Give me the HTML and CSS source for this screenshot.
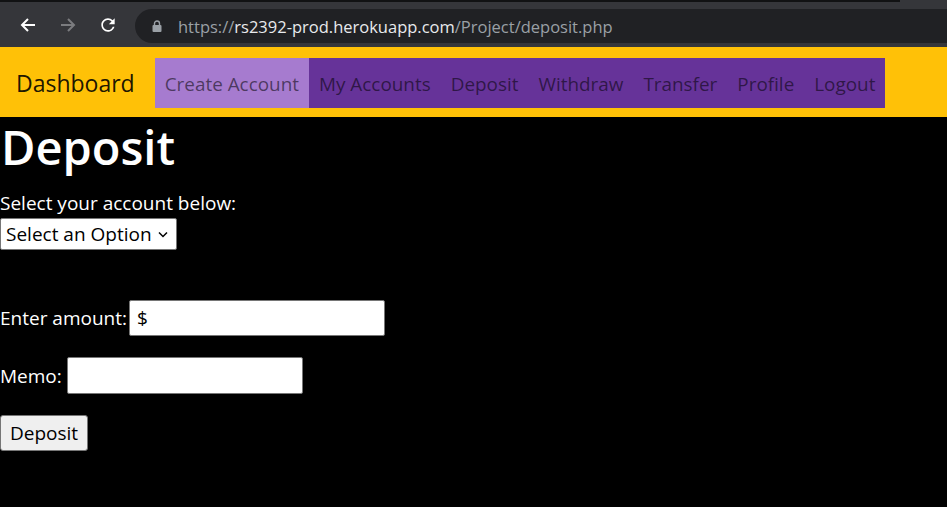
FILE: index.html
```html
<!DOCTYPE html>
<html lang="en">
<head>
<meta charset="utf-8">
<title>Deposit</title>
<link rel="stylesheet" href="styles.css">
</head>
<body>
<div class="chrome">
  <div class="tabstrip"></div>
  <div class="toolbar">
    <span class="tb-btn">
      <svg width="18" height="18" viewBox="0 0 18 18"><path d="M16 9H3M9 3L3 9l6 6" stroke="#ffffff" stroke-width="2" fill="none"/></svg>
    </span>
    <span class="tb-btn">
      <svg width="18" height="18" viewBox="0 0 18 18"><path d="M2 9h13M9 3l6 6-6 6" stroke="#7b7c7f" stroke-width="2" fill="none"/></svg>
    </span>
    <span class="tb-btn">
      <svg width="20" height="20" viewBox="0 0 24 24"><path d="M17.65 6.35A7.96 7.96 0 0 0 12 4c-4.42 0-7.99 3.58-7.99 8s3.57 8 7.99 8c3.73 0 6.84-2.55 7.73-6h-2.08A5.99 5.99 0 0 1 12 18c-3.31 0-6-2.69-6-6s2.69-6 6-6c1.66 0 3.14.69 4.22 1.78L13 11h7V4l-2.35 2.35z" fill="#ffffff"/></svg>
    </span>
    <div class="omnibox">
      <svg class="lock" width="10" height="12" viewBox="0 0 10 12"><path d="M2.5 5V3.5a2.5 2.5 0 0 1 5 0V5" stroke="#9aa0a6" stroke-width="1.4" fill="none"/><rect x="0.5" y="5" width="9" height="7" rx="1" fill="#9aa0a6"/></svg>
      <span class="url"><span class="url-dim">https://</span>rs2392-prod.herokuapp.com<span class="url-dim">/Project/deposit.php</span></span>
    </div>
  </div>
</div>

<nav class="navbar">
  <a class="brand" href="#">Dashboard</a>
  <ul class="nav">
    <li><a class="nav-link active" href="#">Create Account</a></li>
    <li><a class="nav-link" href="#">My Accounts</a></li>
    <li><a class="nav-link" href="#">Deposit</a></li>
    <li><a class="nav-link" href="#">Withdraw</a></li>
    <li><a class="nav-link" href="#">Transfer</a></li>
    <li><a class="nav-link" href="#">Profile</a></li>
    <li><a class="nav-link" href="#">Logout</a></li>
  </ul>
</nav>

<main class="content">
  <h1 class="title">Deposit</h1>
  <form class="form">
    <label class="label">Select your account below:</label>
    <span class="select-wrap">
      <select class="select"><option>Select an Option</option></select>
      <svg class="chev" width="10" height="7" viewBox="0 0 10 7"><path d="M1 1.5l4 4 4-4" stroke="#000" stroke-width="1.5" fill="none"/></svg>
    </span>
    <div class="row row-amount">
      <label class="label">Enter amount:</label>
      <input class="input input-amount" type="text" value="$">
    </div>
    <div class="row row-memo">
      <label class="label">Memo:</label>
      <input class="input input-memo" type="text">
    </div>
    <button class="btn" type="button">Deposit</button>
  </form>
</main>
</body>
</html>
```

FILE: styles.css
```css
html, body {
  margin: 0;
  padding: 0;
}
body {
  background: #000000;
  color: #ffffff;
  font-family: "Open Sans", "Noto Sans", sans-serif;
  font-size: 19px;
  width: 947px;
  height: 507px;
  overflow: hidden;
}

/* browser chrome */
.chrome {
  background: #35363a;
}
.tabstrip {
  height: 2px;
  background: #111213;
  width: 900px;
}
.toolbar {
  height: 45px;
  display: flex;
  align-items: center;
  padding-left: 8px;
  box-sizing: border-box;
}
.tb-btn {
  width: 40px;
  height: 34px;
  display: flex;
  align-items: center;
  justify-content: center;
}
.omnibox {
  margin-left: 7px;
  flex: 1;
  height: 34px;
  margin-top: 3px;
  background: #202124;
  border-radius: 17px 0 0 17px;
  display: flex;
  align-items: center;
  padding-left: 17px;
}
.lock {
  margin-right: 16px;
}
.url {
  color: #e8eaed;
  font-size: 16.5px;
}
.url-dim {
  color: #9aa0a6;
}

/* navbar */
.navbar {
  height: 70px;
  background: #ffc107;
  display: flex;
  align-items: center;
  padding-left: 16px;
  box-sizing: border-box;
}
.brand {
  color: rgba(0, 0, 0, 0.9);
  text-decoration: none;
  font-size: 23px;
  margin-right: 20px;
  margin-top: 2px;
}
.nav {
  list-style: none;
  margin: 2px 0 0 0;
  padding: 0;
  display: flex;
  background: #663399;
  height: 50px;
}
.nav li {
  display: flex;
}
.nav-link {
  display: flex;
  align-items: center;
  padding: 2px 10px 0 10px;
  color: rgba(0, 0, 0, 0.55);
  text-decoration: none;
  font-size: 18.9px;
}
.nav-link.active {
  background: #a67bcf;
}

/* content */
.content {
  padding: 0;
}
.title {
  margin: 0 0 11px 0;
  font-size: 47px;
  font-weight: 600;
  line-height: 60px;
  padding-left: 1px;
}
.form {
  display: flex;
  flex-direction: column;
  align-items: flex-start;
}
.label {
  line-height: 30px;
  white-space: nowrap;
}
.select-wrap {
  position: relative;
  display: block;
}
.select {
  appearance: none;
  -webkit-appearance: none;
  width: 177px;
  height: 32px;
  margin: 0;
  border: 1px solid #767676;
  border-radius: 2px;
  background: #ffffff;
  color: #000000;
  font-family: inherit;
  font-size: 19px;
  padding: 0 0 0 5px;
  display: block;
}
.chev {
  position: absolute;
  right: 9px;
  top: 13px;
}
.row {
  display: flex;
  align-items: center;
  gap: 5px;
}
.row-amount {
  margin-top: 50px;
  gap: 2px;
}
.row-memo {
  margin-top: 21px;
}
.input {
  box-sizing: border-box;
  margin: 0;
  border: 1px solid #767676;
  border-radius: 2px;
  background: #ffffff;
  color: #000000;
  font-family: inherit;
  font-size: 19px;
  padding: 0 7px;
}
.input-amount {
  width: 256px;
  height: 36px;
}
.input-memo {
  width: 236px;
  height: 37px;
}
.btn {
  margin-top: 21px;
  width: 88px;
  height: 36px;
  box-sizing: border-box;
  border: 1px solid #767676;
  border-radius: 3px;
  background: #efefef;
  color: #000000;
  font-family: inherit;
  font-size: 19px;
  padding: 0;
}
```
